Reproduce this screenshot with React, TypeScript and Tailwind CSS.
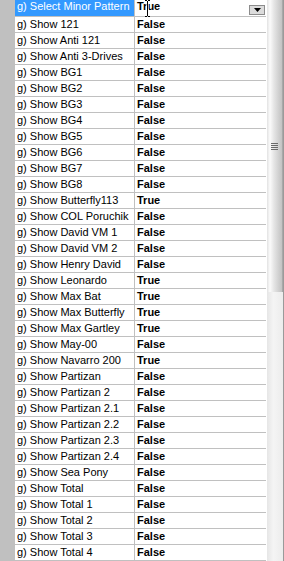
import React from "react";

const rows: [string, boolean][] = [
  ["Select Minor Pattern", true],
  ["Show 121", false],
  ["Show Anti 121", false],
  ["Show Anti 3-Drives", false],
  ["Show BG1", false],
  ["Show BG2", false],
  ["Show BG3", false],
  ["Show BG4", false],
  ["Show BG5", false],
  ["Show BG6", false],
  ["Show BG7", false],
  ["Show BG8", false],
  ["Show Butterfly113", true],
  ["Show COL Poruchik", false],
  ["Show David VM 1", false],
  ["Show David VM 2", false],
  ["Show Henry David", false],
  ["Show Leonardo", true],
  ["Show Max Bat", true],
  ["Show Max Butterfly", true],
  ["Show Max Gartley", true],
  ["Show May-00", false],
  ["Show Navarro 200", true],
  ["Show Partizan", false],
  ["Show Partizan 2", false],
  ["Show Partizan 2.1", false],
  ["Show Partizan 2.2", false],
  ["Show Partizan 2.3", false],
  ["Show Partizan 2.4", false],
  ["Show Sea Pony", false],
  ["Show Total", false],
  ["Show Total 1", false],
  ["Show Total 2", false],
  ["Show Total 3", false],
  ["Show Total 4", false],
];

function DropButton() {
  return (
    <div className="mr-px mt-[5px] flex h-[10px] w-4 items-center justify-center border border-[#8c8c8c] bg-[#dcdcdc]">
      <svg width="7" height="4" viewBox="0 0 7 4">
        <polygon points="0,0 7,0 3.5,4" fill="#000" />
      </svg>
    </div>
  );
}

function IBeam() {
  // mouse cursor sitting over the selected value
  return (
    <svg className="absolute left-[144px] top-0" width="7" height="17" viewBox="0 0 7 17">
      <path d="M1 0.5h2M4 0.5h2M3.5 1v15M1 16.5h2M4 16.5h2" stroke="#fff" strokeWidth="2.2" fill="none" />
      <path d="M1 0.5h2M4 0.5h2M3.5 1v15M1 16.5h2M4 16.5h2" stroke="#000" strokeWidth="1" fill="none" />
    </svg>
  );
}

function ScrollBar() {
  return (
    <div className="flex w-[17px] flex-col border-r border-[#9a9a9a] bg-[linear-gradient(to_right,#e6e6e6,#f4f4f4_40%,#ececec)]">
      {/* thumb */}
      <div className="flex h-[292px] items-center justify-center border-r border-[#a8a8a8] bg-[linear-gradient(to_right,#e2e2e2,#fbfbfb_20%,#e6e6e6_45%,#d2d2d2_75%,#c2c2c2)]">
        <div className="flex w-[7px] flex-col gap-px">
          <div className="h-px bg-[#6a6a6a]" />
          <div className="h-px bg-[#6a6a6a]" />
          <div className="h-px bg-[#6a6a6a]" />
          <div className="h-px bg-[#6a6a6a]" />
        </div>
      </div>
    </div>
  );
}

export default function App() {
  return (
    <div className="relative flex h-[561px] w-[284px] overflow-hidden bg-white font-['Liberation_Sans',Arial,sans-serif] text-[11px] leading-[15px] text-black">
      <div className="flex w-[266px] flex-col">
        {rows.map(([name, val], i) => {
          const sel = i === 0;
          return (
            <div key={name} className={sel ? "flex h-[17px] shrink-0" : "flex h-4 shrink-0"}>
              <div className="w-[15px] shrink-0 bg-[#c0c0c0]" />
              <div
                className={
                  sel
                    ? "w-[120px] shrink-0 overflow-hidden whitespace-nowrap border-b border-r border-[#c0c0c0] bg-[#3399ff] pl-[2px] text-white"
                    : "w-[120px] shrink-0 overflow-hidden whitespace-nowrap border-b border-r border-[#c0c0c0] pl-[2px]"
                }
              >
                <div className={sel ? "-mt-px" : ""}>g) {name}</div>
              </div>
              <div className="flex w-[131px] shrink-0 border-b border-[#c0c0c0] pl-[2px] font-bold">
                <div className={sel ? "-mt-px" : ""}>{val ? "True" : "False"}</div>
                {sel && <div className="ml-auto"><DropButton /></div>}
              </div>
            </div>
          );
        })}
      </div>
      <div className="w-px bg-white" />
      <ScrollBar />
      <IBeam />
    </div>
  );
}
